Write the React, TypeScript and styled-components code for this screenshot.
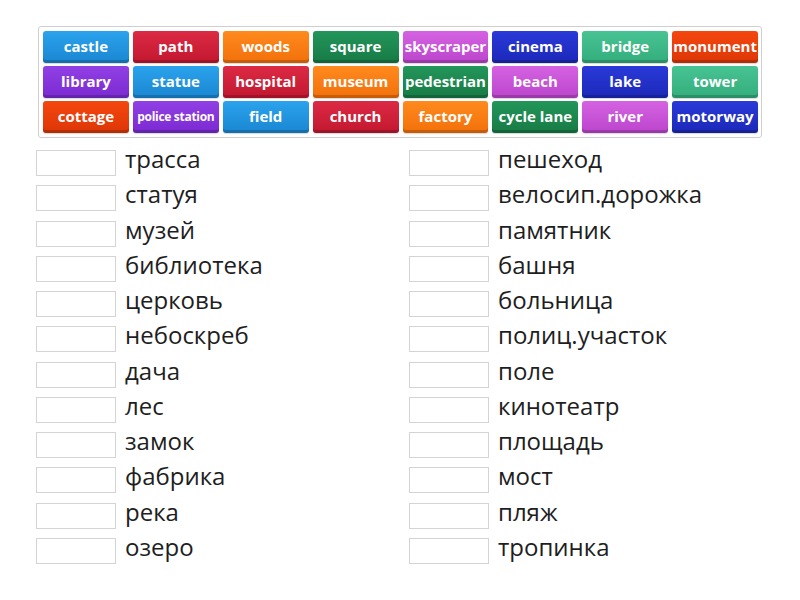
import React from "react";
import styled, { createGlobalStyle } from "styled-components";

const Global = createGlobalStyle`
  html, body { margin: 0; padding: 0; background: #fff; }
  body { font-family: "Open Sans", "Noto Sans", sans-serif; }
`;

const Page = styled.div`
  width: 800px;
  height: 600px;
  box-sizing: border-box;
  padding: 26px 0 0 36px;
  display: flex;
  flex-direction: column;
`;

const Bank = styled.div`
  box-sizing: border-box;
  margin-left: 2px;
  width: 724px;
  border: 1px solid #cfcfcf;
  border-radius: 3px;
  padding: 4px 3px 4px 4px;
  display: grid;
  grid-template-columns: repeat(8, 1fr);
  grid-auto-rows: 32px;
  column-gap: 4px;
  row-gap: 3px;
`;

const palette: Record<string, [string, string]> = {
  blue: ["#2ba3ec", "#1a86d2"],
  red: ["#dc2a44", "#c21730"],
  orange: ["#ff8a1e", "#f2700a"],
  green: ["#23965a", "#177a45"],
  pink: ["#d562e2", "#bb45cc"],
  navy: ["#2a3ad8", "#1c28b8"],
  teal: ["#48c393", "#33ad7c"],
  vermilion: ["#f5470f", "#dc3606"],
  purple: ["#9140e6", "#7a2ad0"],
};

const Tile = styled.div<{ $c: string; $small?: boolean }>`
  border-radius: 3px;
  background: linear-gradient(
    to bottom,
    ${(p) => palette[p.$c][0]},
    ${(p) => palette[p.$c][1]}
  );
  box-shadow: inset 0 -3px 0 rgba(0, 0, 0, 0.18), 0 1px 1px rgba(0, 0, 0, 0.15);
  color: #fff;
  font-weight: 700;
  font-size: ${(p) => (p.$small ? "12px" : "15px")};
  letter-spacing: ${(p) => (p.$small ? "-0.3px" : "0")};
  display: flex;
  align-items: center;
  justify-content: center;
  white-space: nowrap;
  overflow: hidden;
  padding-bottom: 2px;
  box-sizing: border-box;
`;

const Lists = styled.div`
  display: grid;
  grid-template-columns: 373px 373px;
  margin-top: 12px;
`;

const Column = styled.div`
  display: flex;
  flex-direction: column;
`;

const Row = styled.div`
  height: 35.27px;
  display: flex;
  align-items: flex-start;
  gap: 9px;
`;

const Box = styled.div`
  width: 80px;
  height: 26px;
  box-sizing: border-box;
  border: 1px solid #d4d4d4;
  background: #fff;
  flex: none;
`;

const Word = styled.span`
  font-size: 24px;
  line-height: 24px;
  color: #1e1e1e;
  margin-top: -3px;
`;

const tiles: [string, string, boolean?][] = [
  ["castle", "blue"],
  ["path", "red"],
  ["woods", "orange"],
  ["square", "green"],
  ["skyscraper", "pink"],
  ["cinema", "navy"],
  ["bridge", "teal"],
  ["monument", "vermilion"],
  ["library", "purple"],
  ["statue", "blue"],
  ["hospital", "red"],
  ["museum", "orange"],
  ["pedestrian", "green"],
  ["beach", "pink"],
  ["lake", "navy"],
  ["tower", "teal"],
  ["cottage", "vermilion"],
  ["police station", "purple", true],
  ["field", "blue"],
  ["church", "red"],
  ["factory", "orange"],
  ["cycle lane", "green"],
  ["river", "pink"],
  ["motorway", "navy"],
];

const left = [
  "трасса",
  "статуя",
  "музей",
  "библиотека",
  "церковь",
  "небоскреб",
  "дача",
  "лес",
  "замок",
  "фабрика",
  "река",
  "озеро",
];

const right = [
  "пешеход",
  "велосип.дорожка",
  "памятник",
  "башня",
  "больница",
  "полиц.участок",
  "поле",
  "кинотеатр",
  "площадь",
  "мост",
  "пляж",
  "тропинка",
];

export default function App() {
  return (
    <>
      <Global />
      <Page>
        <Bank>
          {tiles.map(([t, c, s]) => (
            <Tile key={t} $c={c} $small={s}>
              {t}
            </Tile>
          ))}
        </Bank>
        <Lists>
          <Column>
            {left.map((w) => (
              <Row key={w}>
                <Box />
                <Word>{w}</Word>
              </Row>
            ))}
          </Column>
          <Column>
            {right.map((w) => (
              <Row key={w}>
                <Box />
                <Word>{w}</Word>
              </Row>
            ))}
          </Column>
        </Lists>
      </Page>
    </>
  );
}
